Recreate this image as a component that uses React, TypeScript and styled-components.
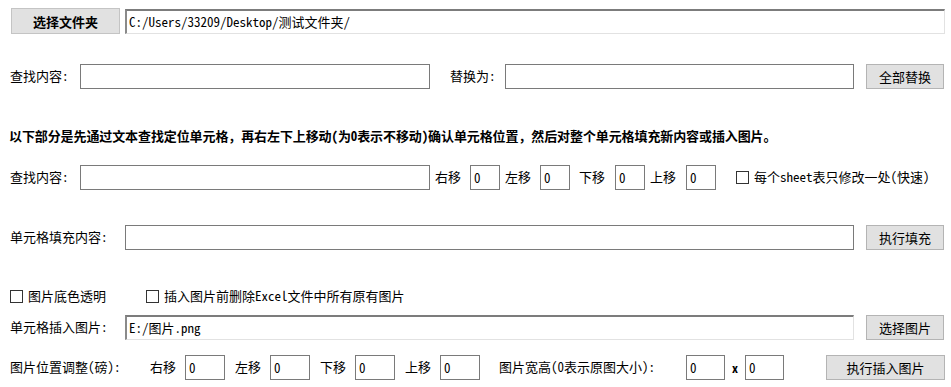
import React from "react";
import styled, { createGlobalStyle } from "styled-components";

const Global = createGlobalStyle`
  html, body { margin: 0; padding: 0; background: #ffffff; }
  body {
    font-family: "Noto Sans Mono CJK SC", "Noto Sans CJK SC", "Liberation Mono", monospace;
    font-size: 13px;
    color: #000;
  }
  * { box-sizing: border-box; }
`;

const Page = styled.div`
  width: 951px;
  height: 387px;
  display: flex;
  flex-direction: column;
  overflow: hidden;
`;

const Row = styled.div<{ $mt: number; $h?: number }>`
  display: flex;
  align-items: center;
  height: ${(p) => p.$h ?? 26}px;
  margin-top: ${(p) => p.$mt}px;
  flex-shrink: 0;
`;

const Label = styled.span<{ $ml?: number; $w?: number }>`
  margin-left: ${(p) => p.$ml ?? 0}px;
  width: ${(p) => (p.$w ? `${p.$w}px` : "auto")};
  flex-shrink: 0;
  white-space: nowrap;
  font-size: 13px;
  line-height: 16px;
`;

const Notice = styled.div`
  margin-left: 9px;
  font-weight: 700;
  font-size: 13px;
  line-height: 16px;
  white-space: nowrap;
  letter-spacing: -0.1px;
`;

const TextInput = styled.input<{ $ml?: number; $w: number; $h?: number }>`
  margin: 0 0 0 ${(p) => p.$ml ?? 0}px;
  width: ${(p) => p.$w}px;
  height: ${(p) => p.$h ?? 25}px;
  border: 1px solid #7a7a7a;
  background: #fff;
  padding: 0 3px;
  font-family: "Noto Sans Mono CJK SC", "Noto Sans CJK SC", "Liberation Mono", monospace;
  font-size: 13px;
  color: #000;
  outline: none;
  flex-shrink: 0;
`;

const PathInput = styled.input<{ $ml?: number; $w: number }>`
  margin: 0 0 0 ${(p) => p.$ml ?? 0}px;
  width: ${(p) => p.$w}px;
  height: 25px;
  border-top: 2px solid #7c7c7c;
  border-left: 2px solid #8a8a8a;
  border-right: 1px solid #e2e2e2;
  border-bottom: 1px solid #e2e2e2;
  background: #fff;
  padding: 0 2px;
  font-family: "Noto Sans Mono CJK SC", "Noto Sans CJK SC", "Liberation Mono", monospace;
  font-size: 13px;
  color: #000;
  outline: none;
  flex-shrink: 0;
`;

const Button = styled.button<{ $ml?: number; $w: number; $h?: number; $bold?: boolean }>`
  margin: 0 0 0 ${(p) => p.$ml ?? 0}px;
  width: ${(p) => p.$w}px;
  height: ${(p) => p.$h ?? 25}px;
  background: #e1e1e1;
  border: 1px solid ${(p) => (p.$bold ? "#c4c4c4" : "#b4b4b4")};
  border-radius: 0;
  padding: 0;
  font-family: "Noto Sans Mono CJK SC", "Noto Sans CJK SC", sans-serif;
  font-size: 13px;
  font-weight: ${(p) => (p.$bold ? 700 : 400)};
  color: #000;
  flex-shrink: 0;
  cursor: default;
`;

const CheckLabel = styled.label<{ $ml?: number }>`
  margin-left: ${(p) => p.$ml ?? 0}px;
  display: flex;
  align-items: center;
  white-space: nowrap;
  font-size: 13px;
  line-height: 16px;
`;

const Box = styled.span`
  width: 13px;
  height: 13px;
  border: 1px solid #333;
  background: #fff;
  margin-right: 5px;
  flex-shrink: 0;
`;

const Times = styled.span`
  margin-left: 7px;
  width: 13px;
  font-weight: 700;
  font-size: 12px;
  flex-shrink: 0;
`;

export default function App() {
  return (
    <>
      <Global />
      <Page>
        <Row $mt={8}>
          <Button $ml={11} $w={109} $h={26} $bold>选择文件夹</Button>
          <PathInput $ml={5} $w={820} defaultValue="C:/Users/33209/Desktop/测试文件夹/" />
        </Row>

        <Row $mt={29}>
          <Label $ml={10} $w={70}>查找内容:</Label>
          <TextInput $w={350} />
          <Label $ml={20} $w={55}>替换为:</Label>
          <TextInput $w={349} />
          <Button $ml={12} $w={78}>全部替换</Button>
        </Row>

        <Row $mt={34}>
          <Notice>以下部分是先通过文本查找定位单元格，再右左下上移动(为0表示不移动)确认单元格位置，然后对整个单元格填充新内容或插入图片。</Notice>
        </Row>

        <Row $mt={15}>
          <Label $ml={10} $w={70}>查找内容:</Label>
          <TextInput $w={350} />
          <Label $ml={5} $w={35}>右移</Label>
          <TextInput $w={30} defaultValue="0" />
          <Label $ml={5} $w={35}>左移</Label>
          <TextInput $w={30} defaultValue="0" />
          <Label $ml={9} $w={36}>下移</Label>
          <TextInput $w={30} defaultValue="0" />
          <Label $ml={5} $w={36}>上移</Label>
          <TextInput $w={30} defaultValue="0" />
          <CheckLabel $ml={20}>
            <Box />
            每个sheet表只修改一处(快速)
          </CheckLabel>
        </Row>

        <Row $mt={34}>
          <Label $ml={10} $w={115}>单元格填充内容:</Label>
          <TextInput $w={729} />
          <Button $ml={12} $w={78}>执行填充</Button>
        </Row>

        <Row $mt={33}>
          <CheckLabel $ml={10}>
            <Box />
            图片底色透明
          </CheckLabel>
          <CheckLabel $ml={40}>
            <Box />
            插入图片前删除Excel文件中所有原有图片
          </CheckLabel>
        </Row>

        <Row $mt={5}>
          <Label $ml={10} $w={115}>单元格插入图片:</Label>
          <PathInput $w={729} defaultValue="E:/图片.png" />
          <Button $ml={12} $w={78}>选择图片</Button>
        </Row>

        <Row $mt={14}>
          <Label $ml={10} $w={140}>图片位置调整(磅):</Label>
          <Label $w={35}>右移</Label>
          <TextInput $w={40} defaultValue="0" />
          <Label $ml={10} $w={35}>左移</Label>
          <TextInput $w={40} defaultValue="0" />
          <Label $ml={10} $w={35}>下移</Label>
          <TextInput $w={40} defaultValue="0" />
          <Label $ml={10} $w={35}>上移</Label>
          <TextInput $w={40} defaultValue="0" />
          <Label $ml={19} $w={187}>图片宽高(0表示原图大小):</Label>
          <TextInput $w={39} defaultValue="0" />
          <Times>x</Times>
          <TextInput $w={39} defaultValue="0" />
          <Button $ml={42} $w={119}>执行插入图片</Button>
        </Row>
      </Page>
    </>
  );
}
